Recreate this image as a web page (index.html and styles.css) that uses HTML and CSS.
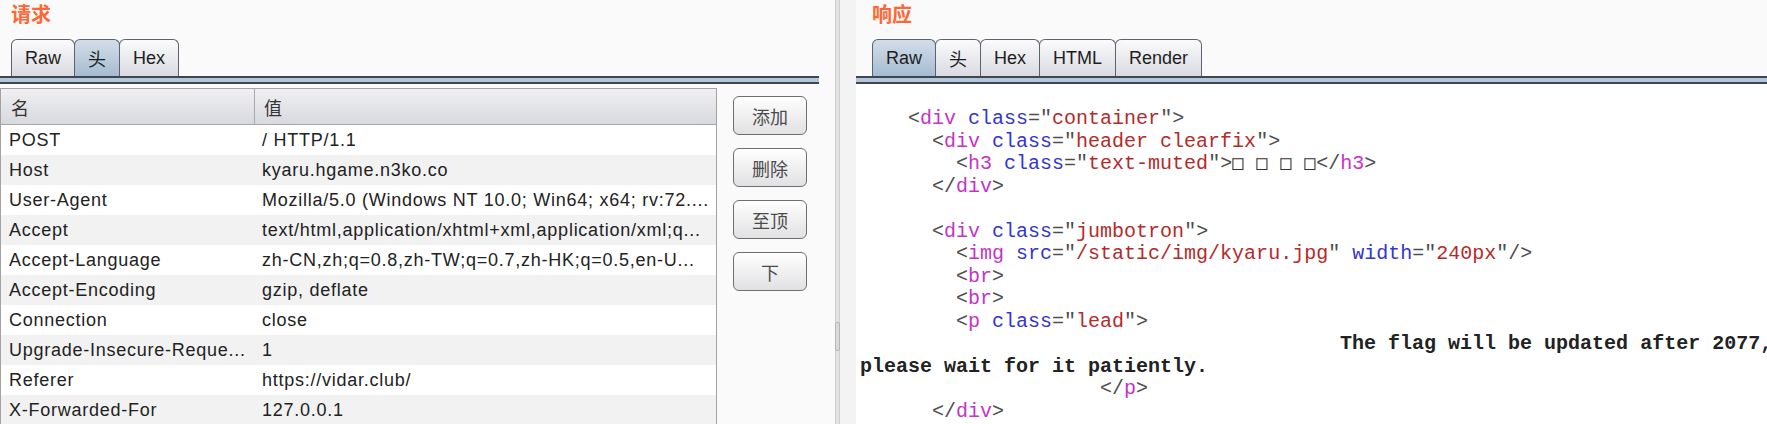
FILE: index.html
```html
<!DOCTYPE html>
<html lang="zh-CN">
  <head>
    <meta charset="UTF-8" />
    <meta name="viewport" content="width=device-width, initial-scale=1.0" />
    <title>请求 / 响应</title>
    <link rel="stylesheet" href="styles.css">
  </head>
  <body>
    <div class="app">
      <section class="pane pane-req">
        <h2 class="pane-title">请求</h2>
        <div class="tabs">
          <span class="tab">Raw</span>
          <span class="tab active">头</span>
          <span class="tab">Hex</span>
        </div>
        <div class="tab-line"></div>

        <div class="req-body">
          <div class="headers">
            <div class="row head">
              <div class="cell">名</div>
              <div class="cell">值</div>
            </div>
            <div class="row">
              <div class="cell">POST</div>
              <div class="cell">/ HTTP/1.1</div>
            </div>
            <div class="row">
              <div class="cell">Host</div>
              <div class="cell">kyaru.hgame.n3ko.co</div>
            </div>
            <div class="row">
              <div class="cell">User-Agent</div>
              <div class="cell">Mozilla/5.0 (Windows NT 10.0; Win64; x64; rv:72....</div>
            </div>
            <div class="row">
              <div class="cell">Accept</div>
              <div class="cell">text/html,application/xhtml+xml,application/xml;q...</div>
            </div>
            <div class="row">
              <div class="cell">Accept-Language</div>
              <div class="cell">zh-CN,zh;q=0.8,zh-TW;q=0.7,zh-HK;q=0.5,en-U...</div>
            </div>
            <div class="row">
              <div class="cell">Accept-Encoding</div>
              <div class="cell">gzip, deflate</div>
            </div>
            <div class="row">
              <div class="cell">Connection</div>
              <div class="cell">close</div>
            </div>
            <div class="row">
              <div class="cell">Upgrade-Insecure-Reque...</div>
              <div class="cell">1</div>
            </div>
            <div class="row">
              <div class="cell">Referer</div>
              <div class="cell">https://vidar.club/</div>
            </div>
            <div class="row">
              <div class="cell">X-Forwarded-For</div>
              <div class="cell">127.0.0.1</div>
            </div>
          </div>

          <div class="actions">
            <button class="btn">添加</button>
            <button class="btn">删除</button>
            <button class="btn">至顶</button>
            <button class="btn">下</button>
          </div>
        </div>
      </section>

      <div class="splitter"><span class="grip"></span></div>

      <section class="pane pane-resp">
        <h2 class="pane-title">响应</h2>
        <div class="tabs">
          <span class="tab active">Raw</span>
          <span class="tab">头</span>
          <span class="tab">Hex</span>
          <span class="tab">HTML</span>
          <span class="tab">Render</span>
        </div>
        <div class="tab-line"></div>

<pre class="code">    <span class="p">&lt;</span><span class="t">div</span> <span class="a">class</span><span class="p">="</span><span class="v">container</span><span class="p">"&gt;</span>
      <span class="p">&lt;</span><span class="t">div</span> <span class="a">class</span><span class="p">="</span><span class="v">header clearfix</span><span class="p">"&gt;</span>
        <span class="p">&lt;</span><span class="t">h3</span> <span class="a">class</span><span class="p">="</span><span class="v">text-muted</span><span class="p">"&gt;</span><span class="tofu">□</span> <span class="tofu">□</span> <span class="tofu">□</span> <span class="tofu">□</span><span class="p">&lt;/</span><span class="t">h3</span><span class="p">&gt;</span>
      <span class="p">&lt;/</span><span class="t">div</span><span class="p">&gt;</span>

      <span class="p">&lt;</span><span class="t">div</span> <span class="a">class</span><span class="p">="</span><span class="v">jumbotron</span><span class="p">"&gt;</span>
        <span class="p">&lt;</span><span class="t">img</span> <span class="a">src</span><span class="p">="</span><span class="v">/static/img/kyaru.jpg</span><span class="p">"</span> <span class="a">width</span><span class="p">="</span><span class="v">240px</span><span class="p">"/&gt;</span>
        <span class="p">&lt;</span><span class="t">br</span><span class="p">&gt;</span>
        <span class="p">&lt;</span><span class="t">br</span><span class="p">&gt;</span>
        <span class="p">&lt;</span><span class="t">p</span> <span class="a">class</span><span class="p">="</span><span class="v">lead</span><span class="p">"&gt;</span>
<b>                                        The flag will be updated after 2077,</b>
<b>please wait for it patiently.</b>
                    <span class="p">&lt;/</span><span class="t">p</span><span class="p">&gt;</span>
      <span class="p">&lt;/</span><span class="t">div</span><span class="p">&gt;</span></pre>
      </section>
    </div>
  </body>
</html>
```

FILE: styles.css
```css
body {
  margin: 0;
  background: #fafafa;
  font-family: "Liberation Sans", Arial, "Noto Sans CJK SC", sans-serif;
  color: #222;
  overflow: hidden;
}

.app {
  display: flex;
  width: 1767px;
  height: 424px;
  overflow: hidden;
}

.pane {
  display: flex;
  flex-direction: column;
  min-width: 0;
}

.pane-req {
  width: 819px;
  margin-right: 16px;
  flex: none;
}

.pane-resp {
  flex: 1;
}

.pane-title {
  margin: 0;
  height: 39px;
  line-height: 28px;
  font-size: 20px;
  font-weight: bold;
  color: #ff6633;
  font-family: "Noto Sans CJK SC", sans-serif;
}

.pane-req .pane-title,
.pane-req .tabs {
  padding-left: 11px;
}

.pane-resp .pane-title,
.pane-resp .tabs {
  padding-left: 16px;
}

.tabs {
  display: flex;
  height: 37px;
}

.tab {
  display: flex;
  align-items: center;
  padding: 0 13px;
  margin-right: -1px;
  font-size: 18px;
  color: #1e1e1e;
  border: 1px solid #5d626e;
  border-bottom: none;
  border-radius: 6px 6px 0 0;
  background: linear-gradient(#fbfbfc, #d9dbe0);
}

.tab.active {
  background: linear-gradient(#d3dee9, #a5bcd1);
}

.tab-line {
  height: 4px;
  background: #b3c7da;
  border-top: 2px solid #41454f;
  border-bottom: 2px solid #41454f;
}

/* request headers table */
.req-body {
  display: flex;
  flex: 1;
  min-height: 0;
}

.headers {
  width: 717px;
  margin-top: 4px;
  box-sizing: border-box;
  border: 1px solid #a2a2a2;
  border-bottom: none;
  background: #fff;
}

.row {
  display: grid;
  grid-template-columns: 254px 1fr;
  height: 30px;
  align-items: center;
  font-size: 18px;
  letter-spacing: 0.75px;
}

.row:nth-child(odd) {
  background: #f2f2f2;
}

.row .cell {
  white-space: nowrap;
  overflow: hidden;
  padding-left: 8px;
}

.row .cell + .cell {
  padding-left: 7px;
}

.row.head {
  height: 35px;
  align-items: stretch;
  background: linear-gradient(#f0f0f2, #d8d9de);
  border-bottom: 1px solid #a5a5a8;
  color: #333;
  letter-spacing: 0;
}

.row.head .cell {
  display: flex;
  align-items: center;
  padding-left: 10px;
}

.row.head .cell:first-child {
  border-right: 1px solid #a9a9ad;
}

.row.head .cell + .cell {
  padding-left: 9px;
}

.actions {
  display: flex;
  flex-direction: column;
  gap: 13px;
  padding: 12px 0 0 16px;
}

.btn {
  width: 74px;
  height: 39px;
  padding: 0;
  font-family: "Noto Sans CJK SC", sans-serif;
  font-size: 18px;
  color: #4b4b4b;
  border: 1px solid #6e6e6e;
  border-radius: 6px;
  background: linear-gradient(#ffffff, #e1e1e3);
}

/* divider between the panes */
.splitter {
  flex: none;
  width: 21px;
  display: flex;
  background: #f3f3f3;
}

.grip {
  width: 3px;
  background: #e2e2e2;
  border-left: 1px solid #d0d0d0;
  border-right: 1px solid #d0d0d0;
  position: relative;
}

.grip:after {
  content: "";
  position: absolute;
  left: -1px;
  top: 322px;
  width: 3px;
  height: 27px;
  border: 1px solid #b6b6b6;
  border-radius: 2px;
  background: #dadada;
}

/* raw response */
.code {
  flex: 1;
  margin: 0;
  padding: 24px 0 0 4px;
  background: #fff;
  font-family: "Liberation Mono", "Courier New", monospace;
  font-size: 20px;
  line-height: 22.5px;
  color: #4d4d4d;
  overflow: hidden;
  white-space: pre;
}

.code .p { color: #4d4d4d; }
.code .t { color: #c534c5; }
.code .a { color: #3535cf; }
.code .v { color: #b52a2a; }
.code b { color: #222; }

.tofu {
  display: inline-block;
  width: 12px;
  font-family: "DejaVu Sans Mono", monospace;
  font-size: 19px;
  line-height: 1;
  color: #333;
}
```
